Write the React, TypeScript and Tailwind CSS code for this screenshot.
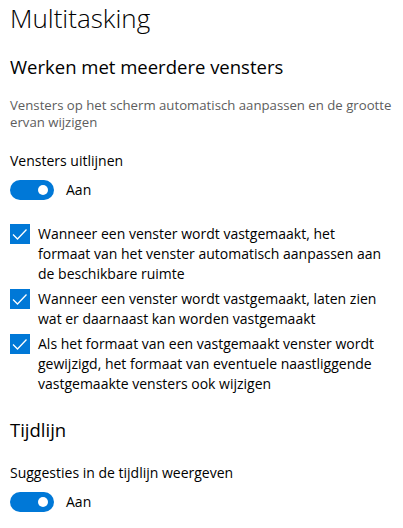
import { ReactNode } from "react";

function Toggle({ label }: { label: string }) {
  return (
    <div className="flex items-center gap-3 mt-[9px]">
      <div className="w-[44px] h-[20px] rounded-full bg-[#0078d7] flex items-center justify-end pr-[6px]">
        <div className="w-[10px] h-[10px] rounded-full bg-white" />
      </div>
      <span className="text-[14px] leading-[20px]">{label}</span>
    </div>
  );
}

function Check({ children }: { children: ReactNode }) {
  return (
    <div className="flex items-start gap-2">
      <div className="w-[20px] h-[20px] bg-[#0078d7] shrink-0">
        <svg width="20" height="20" viewBox="0 0 20 20">
          <path d="M3 10.5 L7.5 15 L16.5 5.5" fill="none" stroke="white" strokeWidth="1.3" />
        </svg>
      </div>
      <p className="text-[14px] leading-[20px] whitespace-nowrap">{children}</p>
    </div>
  );
}

export default function App() {
  return (
    <div className="w-[403px] h-[528px] bg-white pl-[10px] text-black overflow-hidden font-['Open_Sans',sans-serif]">
      <h1 className="text-[26px] leading-[36px] font-light">Multitasking</h1>

      <h2 className="text-[18.5px] leading-[28px] mt-[17px]">Werken met meerdere vensters</h2>
      <p className="text-[13.2px] leading-[17px] text-[#5d5d5d] mt-[16px] whitespace-nowrap">
        Vensters op het scherm automatisch aanpassen en de grootte
        <br />
        ervan wijzigen
      </p>

      <p className="text-[14px] leading-[20px] mt-[20px]">Vensters uitlijnen</p>
      <Toggle label="Aan" />

      <div className="flex flex-col gap-[5px] mt-[24px]">
        <Check>
          Wanneer een venster wordt vastgemaakt, het
          <br />
          formaat van het venster automatisch aanpassen aan
          <br />
          de beschikbare ruimte
        </Check>
        <Check>
          Wanneer een venster wordt vastgemaakt, laten zien
          <br />
          wat er daarnaast kan worden vastgemaakt
        </Check>
        <Check>
          Als het formaat van een vastgemaakt venster wordt
          <br />
          gewijzigd, het formaat van eventuele naastliggende
          <br />
          vastgemaakte vensters ook wijzigen
        </Check>
      </div>

      <h2 className="text-[18.5px] leading-[28px] mt-[22px]">Tijdlijn</h2>
      <p className="text-[14px] leading-[20px] mt-[19px]">Suggesties in de tijdlijn weergeven</p>
      <Toggle label="Aan" />
    </div>
  );
}
